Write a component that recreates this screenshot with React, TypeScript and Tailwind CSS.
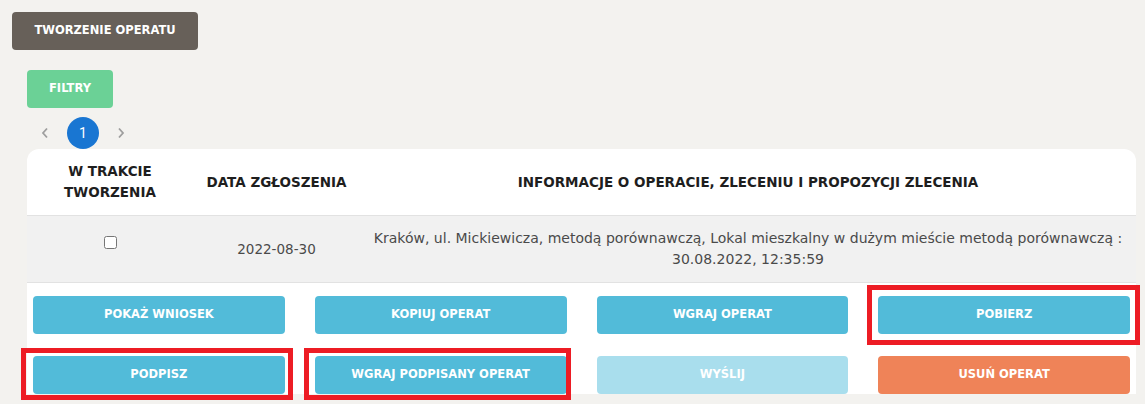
import React from 'react';

type Action = {
  label: string;
  tone: 'blue' | 'light' | 'orange';
  mark?: string;
};

const actions: Action[] = [
  { label: 'Pokaż wniosek', tone: 'blue' },
  { label: 'Kopiuj operat', tone: 'blue' },
  { label: 'Wgraj operat', tone: 'blue' },
  { label: 'Pobierz', tone: 'blue', mark: '-left-[11px] -right-[10px] -top-[11px] -bottom-[11px]' },
  { label: 'Podpisz', tone: 'blue', mark: '-left-[12px] -right-[8px] -top-[8px] -bottom-[6px]' },
  { label: 'Wgraj podpisany operat', tone: 'blue', mark: '-left-[11px] -right-[4px] -top-[8px] -bottom-[6px]' },
  { label: 'Wyślij', tone: 'light' },
  { label: 'Usuń operat', tone: 'orange' },
];

const toneClass = {
  blue: 'bg-[#52bbd9]',
  light: 'bg-[#a9deed]',
  orange: 'bg-[#ef8358]',
};

const Chevron = ({ dir }: { dir: 'left' | 'right' }) => (
  <svg width="8" height="12" viewBox="0 0 8 12" className="text-[#9e9e9e]">
    <polyline
      points={dir === 'left' ? '6,1.5 2,6 6,10.5' : '2,1.5 6,6 2,10.5'}
      fill="none"
      stroke="currentColor"
      strokeWidth="1.8"
    />
  </svg>
);

export default function App() {
  return (
    <div className="min-h-screen bg-[#f3f2ef] font-['DejaVu_Sans',sans-serif]">
      <div className="pt-3 pl-3">
        <button className="h-[38px] w-[186px] rounded-[4px] bg-[#676059] text-[11.5px] font-bold text-white uppercase">
          Tworzenie operatu
        </button>
      </div>

      <div className="pl-[27px] pr-[9px] pt-5">
        <button className="h-[38px] w-[86px] rounded-[4px] bg-[#6bd196] text-[11.5px] font-bold text-white uppercase">
          Filtry
        </button>

        {/* pagination */}
        <div className="flex h-[41px] items-center pt-[9px] pl-[14px]">
          <Chevron dir="left" />
          <div className="ml-[18px] flex h-8 w-8 items-center justify-center rounded-full bg-[#1976d2] font-['Roboto',sans-serif] text-[14px] text-white">
            1
          </div>
          <div className="ml-[18px]">
            <Chevron dir="right" />
          </div>
        </div>

        <div className="rounded-t-xl bg-white">
          <div className="grid grid-cols-[166px_167px_1fr] border-b border-[#e2e2e2] h-[67px] items-center text-center text-[13.5px] font-bold leading-[21px] text-[#1e1e1e] uppercase">
            <div>
              W trakcie
              <br />
              tworzenia
            </div>
            <div>Data zgłoszenia</div>
            <div>Informacje o operacie, zleceniu i propozycji zlecenia</div>
          </div>

          <div className="grid grid-cols-[166px_167px_1fr] border-b border-[#e2e2e2] bg-[#f1f1f1] h-[67px] items-center text-center leading-[21px] text-[#4a4a4a]">
            <div className="flex justify-center pb-[13px]">
              <input type="checkbox" className="h-[13px] w-[13px]" />
            </div>
            <div className="text-[13.5px]">2022-08-30</div>
            <div className="px-2 text-[14px]">
              Kraków, ul. Mickiewicza, metodą porównawczą, Lokal mieszkalny w dużym mieście metodą porównawczą :
              <br />
              30.08.2022, 12:35:59
            </div>
          </div>

          <div className="grid grid-cols-4 gap-x-[30px] gap-y-[22px] px-[6px] pt-[13px]">
            {actions.map((a) => (
              <div key={a.label} className="relative">
                <button
                  className={`h-[38px] w-full rounded-[4px] text-[11.5px] font-bold text-white uppercase ${toneClass[a.tone]}`}
                >
                  {a.label}
                </button>
                {a.mark && (
                  <div className={`pointer-events-none absolute border-[5px] border-[#ed1c24] ${a.mark}`} />
                )}
              </div>
            ))}
          </div>
        </div>
      </div>
    </div>
  );
}
